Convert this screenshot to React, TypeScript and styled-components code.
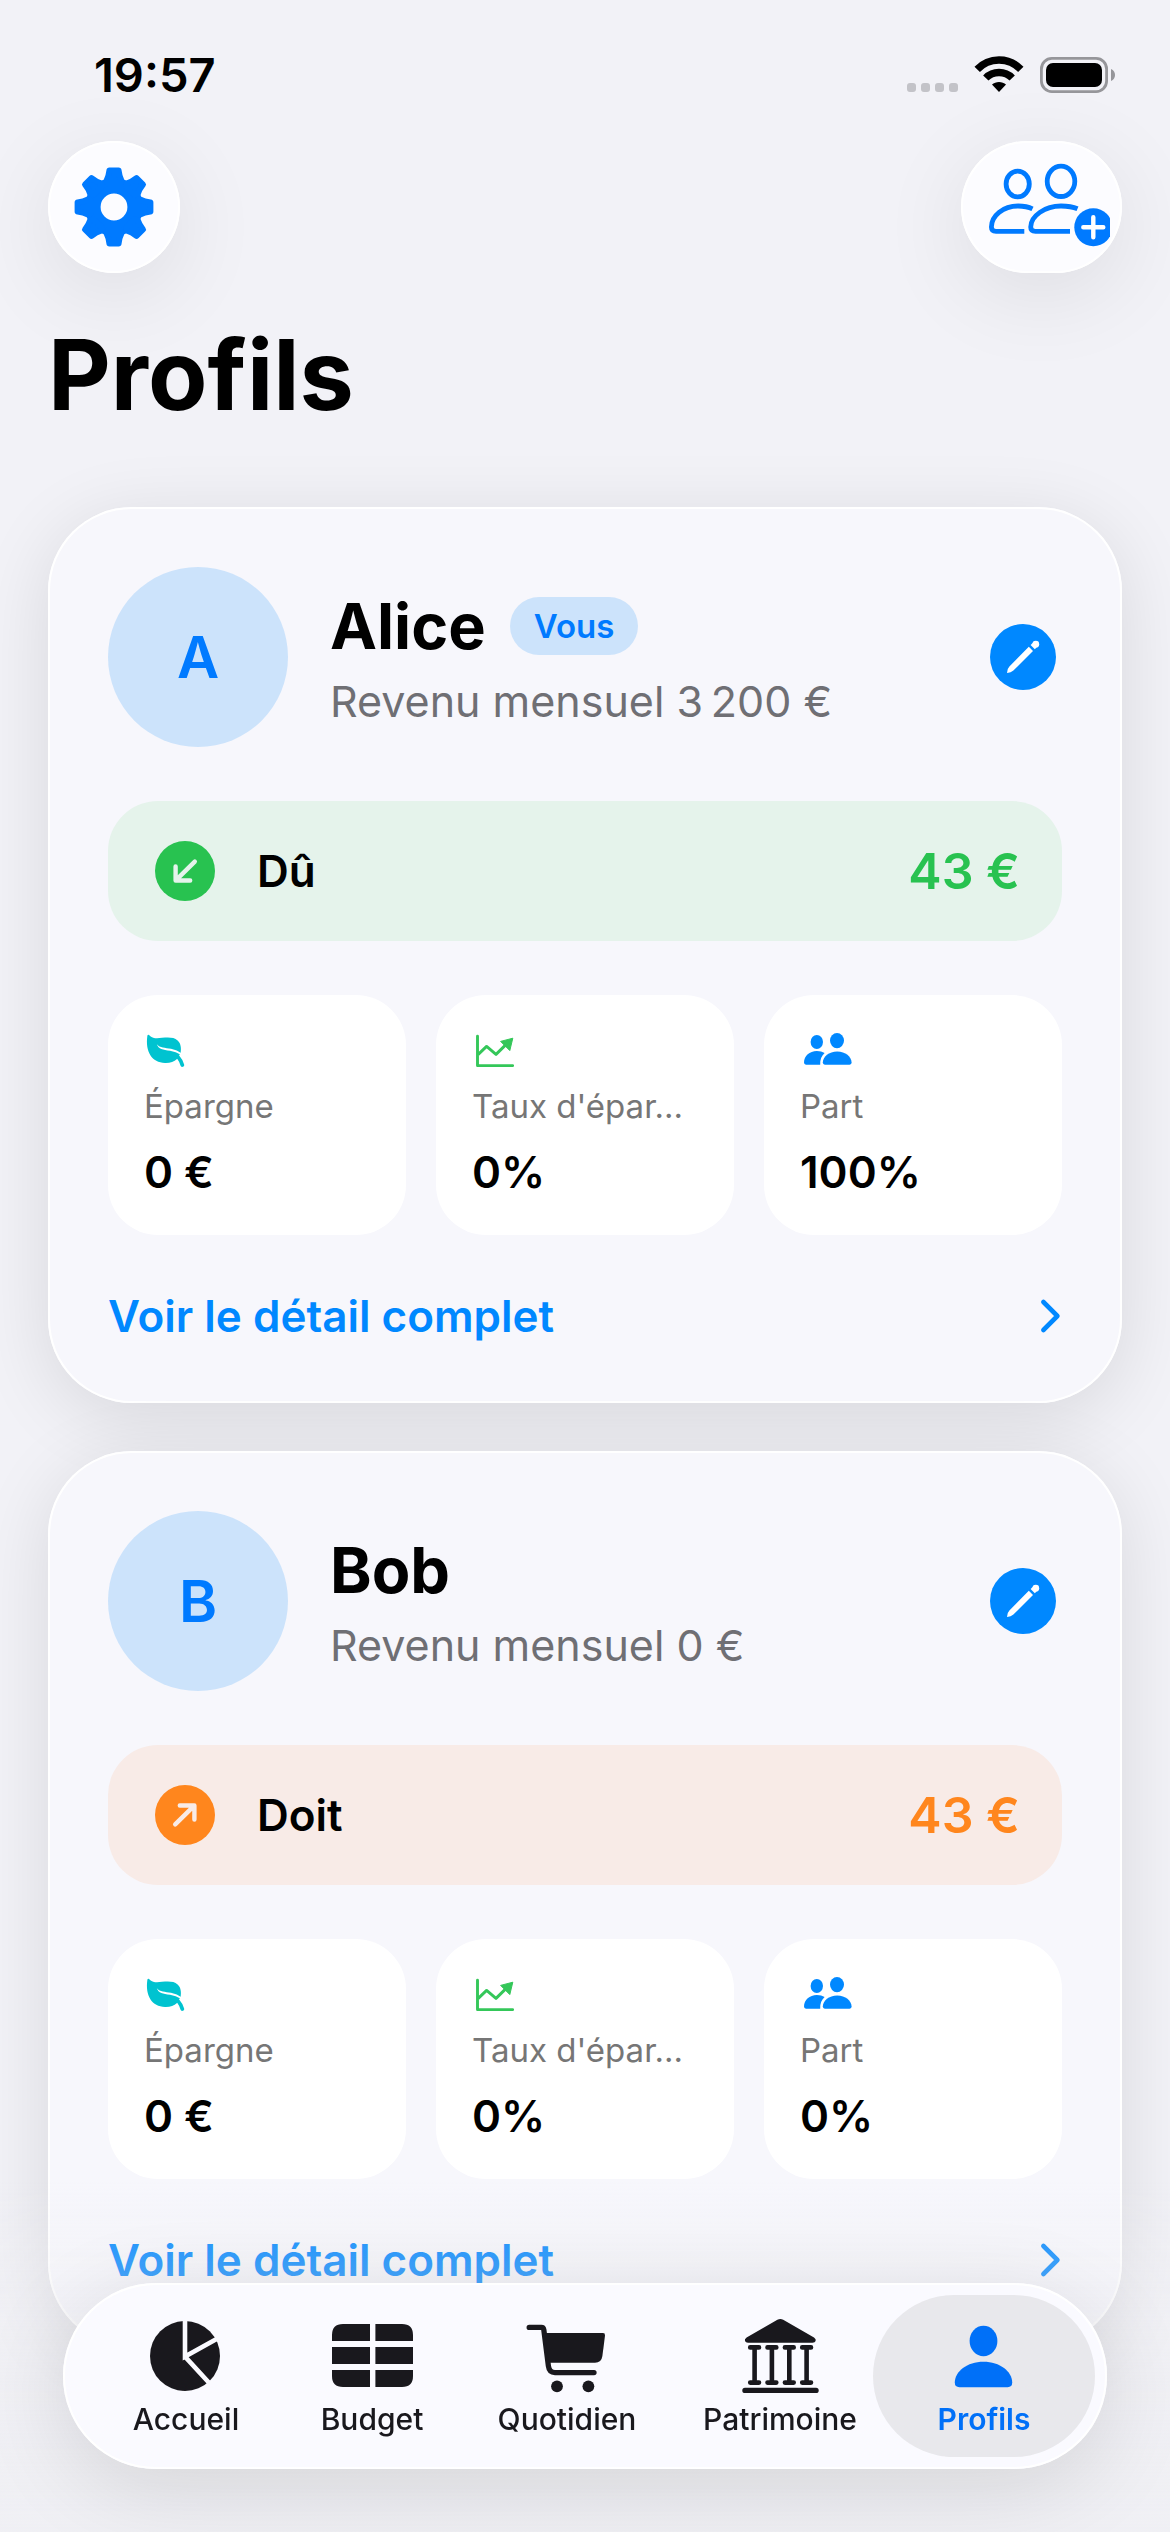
import React from "react";
import styled, { createGlobalStyle } from "styled-components";

const BLUE = "#0088ff";
const DEEP_BLUE = "#007aff";
const INK = "#19181d";

const GlobalStyle = createGlobalStyle`
  *, *::before, *::after { box-sizing: border-box; }
  body {
    margin: 0;
    background: #f2f2f7;
    color: #000;
    font-family: Inter, "Noto Sans", "Liberation Sans", sans-serif;
    font-size: 44px;
    line-height: 54px;
  }
  h1, h2, p, dl, dt, dd { margin: 0; }
  button { border: 0; padding: 0; font: inherit; cursor: pointer; }
  a { color: inherit; text-decoration: none; }
  svg { display: block; flex: none; }
`;

const Page = styled.div`
  display: flex;
  flex-direction: column;
  min-height: 100vh;
  padding: 0 48px 185px;
`;

const StatusBar = styled.div`
  display: flex;
  align-items: center;
  justify-content: space-between;
  height: 141px;
  padding: 8px 6px 0 46px;
`;

const Clock = styled.time`
  font-size: 47px;
  font-weight: 600;
`;

const Toolbar = styled.div`
  display: flex;
  justify-content: space-between;
`;

const GlassButton = styled.button<{ $width: number }>`
  display: flex;
  align-items: center;
  justify-content: center;
  width: ${(p) => p.$width}px;
  height: 132px;
  border-radius: 66px;
  background: #fcfcff;
  color: ${DEEP_BLUE};
  box-shadow: inset 0 0 0 2px #fff, 0 20px 90px rgba(0, 0, 0, 0.09);
`;

const Title = styled.h1`
  margin: 42px 0 72px;
  font-size: 97px;
  line-height: 120px;
  font-weight: 700;
`;

const CardList = styled.main`
  display: flex;
  flex-direction: column;
  gap: 48px;
`;

const Card = styled.article`
  display: flex;
  flex-direction: column;
  gap: 54px;
  padding: 60px;
  border-radius: 84px;
  background: #f7f7fc;
  box-shadow: inset 0 0 0 2px #fff, 0 14px 76px rgba(0, 0, 0, 0.11);
`;

const CardHeader = styled.header`
  display: flex;
  align-items: center;
  gap: 42px;
  padding-right: 6px;
`;

const Avatar = styled.div`
  display: grid;
  place-items: center;
  flex: none;
  width: 180px;
  height: 180px;
  border-radius: 50%;
  background: #cce3fb;
  color: ${DEEP_BLUE};
  font-size: 58px;
  font-weight: 600;
`;

const Identity = styled.div`
  display: flex;
  flex-direction: column;
  flex: 1;
  min-width: 0;
  gap: 8px;
`;

const NameRow = styled.div`
  display: flex;
  align-items: center;
  gap: 24px;
`;

const Name = styled.h2`
  font-size: 63px;
  line-height: 80px;
  font-weight: 700;
`;

const Badge = styled.span`
  padding: 8px 24px;
  border-radius: 29px;
  background: #cce3fb;
  color: ${DEEP_BLUE};
  font-size: 33px;
  line-height: 42px;
  font-weight: 600;
`;

const Income = styled.p`
  color: #6f6f74;
  font-size: 43px;
`;

const EditButton = styled.button`
  width: 66px;
  height: 66px;
  border-radius: 50%;
  background: ${BLUE};
  color: #fff;
`;

const Balance = styled.div<{ $owed: boolean }>`
  display: flex;
  align-items: center;
  gap: 42px;
  height: 140px;
  padding: 0 42px 0 47px;
  border-radius: 50px;
  background: ${(p) => (p.$owed ? "#e5f3eb" : "#f8ebe7")};
  color: ${(p) => (p.$owed ? "#28c250" : "#ff861d")};
`;

const BalanceLabel = styled.span`
  flex: 1;
  color: #000;
  font-weight: 600;
`;

const Amount = styled.span`
  font-size: 50px;
  font-weight: 600;
`;

const StatGrid = styled.dl`
  display: grid;
  grid-template-columns: repeat(3, 1fr);
  gap: 30px;
`;

const Stat = styled.div<{ $tint: string }>`
  display: flex;
  flex-direction: column;
  gap: 18px;
  min-width: 0;
  padding: 36px;
  border-radius: 50px;
  background: #fff;
  color: ${(p) => p.$tint};
`;

const StatLabel = styled.dt`
  color: #767676;
  font-size: 33px;
  line-height: 42px;
  white-space: nowrap;
`;

const StatValue = styled.dd`
  color: #000;
  font-weight: 600;
`;

const DetailLink = styled.a`
  && { color: ${BLUE}; }
  display: flex;
  align-items: center;
  justify-content: space-between;
  font-weight: 600;
`;

const BottomFade = styled.div`
  position: fixed;
  inset: auto 0 0;
  height: 352px;
  background: linear-gradient(rgba(238, 238, 242, 0), rgba(238, 238, 242, 0.3) 30%, rgba(238, 238, 242, 0.6));
  pointer-events: none;
`;

const TabBar = styled.nav`
  position: fixed;
  inset: auto 63px 63px;
  display: grid;
  grid-template-columns: 37fr 25fr 40fr 31fr 37fr;
  padding: 12px;
  border-radius: 93px;
  background: #fafaff;
  box-shadow: inset 0 0 0 2px #fff, 0 18px 90px rgba(0, 0, 0, 0.12);
`;

const Tab = styled.a<{ $active?: boolean }>`
  && { color: ${(p) => (p.$active ? "#0070f8" : INK)}; }
  display: flex;
  flex-direction: column;
  align-items: center;
  justify-content: center;
  gap: 5px;
  min-width: 0;
  height: 162px;
  border-radius: 81px;
  background: ${(p) => (p.$active ? "#e8e8ec" : "transparent")};
  font-size: 30px;
  line-height: 36px;
  font-weight: ${(p) => (p.$active ? 600 : 500)};
`;

const StatusIcons = () => (
  <svg width="210" height="40" viewBox="906 54 210 40" role="img" aria-label="Wi-Fi, batterie pleine">
    {[907, 921, 935, 949].map((x) => (
      <rect key={x} x={x} y="82" width="9" height="9" rx="3" fill="#c3c3c8" />
    ))}
    <g fill="none" stroke="#000" strokeWidth="7.4">
      <path d="M977.2 68.4 C989 55.8 1009 55.8 1020.8 68.4" />
      <path d="M985.8 77 C993 69.6 1005 69.6 1012.2 77" />
    </g>
    <path d="M999 91 L992 83.6 C995.5 80 1002.5 80 1006 83.6 Z" fill="#000" />
    <rect x="1041.4" y="57.4" width="65.2" height="33.2" rx="10.5" fill="none" stroke="#96969a" strokeWidth="2.8" />
    <rect x="1046" y="62" width="56" height="24" rx="7" fill="#000" />
    <path d="M1111 68 C1116.4 70 1116.4 78 1111 80 Z" fill="#96969a" />
  </svg>
);

const GearIcon = () => (
  <svg width="80" height="80" viewBox="-40 -40 80 80" aria-hidden="true">
    <circle r="21.2" fill="none" stroke="currentColor" strokeWidth="15.6" />
    {[0, 45, 90, 135, 180, 225, 270, 315].map((a) => (
      <path
        key={a}
        transform={`rotate(${a})`}
        d="M-4.6 -36.4 H4.6 Q5.4 -30 7.4 -26.5 L6 -23 H-6 L-7.4 -26.5 Q-5.4 -30 -4.6 -36.4 Z"
        fill="currentColor"
        stroke="currentColor"
        strokeWidth="6"
        strokeLinejoin="round"
      />
    ))}
  </svg>
);

const AddPeopleIcon = () => (
  <svg width="161" height="132" viewBox="0 0 161 132" aria-hidden="true">
    <clipPath id="badge-edge">
      <rect width="149" height="132" />
    </clipPath>
    <g fill="none" stroke="currentColor" strokeWidth="4.8">
      <ellipse cx="56.7" cy="43" rx="11.6" ry="12.9" />
      <ellipse cx="100" cy="40.3" rx="13.8" ry="15.2" />
      <path d="M71.5 67.8 C67 65.6 62 65 57 65 C42 65 30.4 75 30.4 86 Q30.4 90.3 35 90.3 H63.3" />
      <path d="M116.5 67.8 C111.5 65.6 106 65 100 65 C84 65 69.7 75 69.7 86 Q69.7 90.3 74.5 90.3 H109" />
    </g>
    <g clipPath="url(#badge-edge)">
      <circle cx="132.3" cy="86.3" r="19" fill="currentColor" />
    </g>
    <path d="M132.3 76.3 V96.3 M122.3 86.3 H142.3" stroke="#fff" strokeWidth="4.4" strokeLinecap="round" />
  </svg>
);

const PencilIcon = () => (
  <svg width="66" height="66" viewBox="0 0 66 66" aria-hidden="true">
    <path d="M17 49 Q17 45 19.4 42.6 L38.8 22.8 L43 27 L23.4 46.6 Q21 49 17 49 Z" fill="currentColor" />
    <path d="M40.6 21 L42.6 19 L46.8 23.2 L44.8 25.2 Z" fill="currentColor" />
    <circle cx="45.8" cy="20.2" r="3.4" fill="currentColor" />
  </svg>
);

const BalanceIcon = ({ owed }: { owed: boolean }) => (
  <svg width="60" height="60" viewBox="0 0 60 60" aria-hidden="true">
    <circle cx="30" cy="30" r="30" fill="currentColor" />
    <path
      d="M39.8 20.6 L21.5 38.6 M20.6 25.4 V39.5 H35.2"
      transform={owed ? undefined : "rotate(180 30 30)"}
      fill="none"
      stroke={owed ? "#e5f3eb" : "#f8ebe7"}
      strokeWidth="4.4"
      strokeLinecap="round"
      strokeLinejoin="round"
    />
  </svg>
);

const LeafIcon = () => (
  <svg width="52" height="36" viewBox="-2 -3 52 36" aria-hidden="true">
    <path
      d="M1.4 1.6 C2 0.4 3 0.8 4 1.9 C7 4.6 11 4.3 16 3.8 C23 3.2 28 3.2 31.6 6.4 C35 9.6 35.4 14 34.6 19 L31 25 C28 27.6 24 29.2 19 29 C6 28.6 -1 18 1.4 1.6 Z"
      fill="currentColor"
    />
    <path d="M27 20 C32.5 21.5 34.8 26 36.3 31" fill="none" stroke="currentColor" strokeWidth="3.8" strokeLinecap="round" />
    <path d="M10.8 10.2 C14 14 19 13.6 25 14.8 Q31 16 36 19.6 L34.8 20.8 Q30 17.8 24 16.8 C17 15.8 12.4 15 10.8 10.2 Z" fill="#fff" />
  </svg>
);

const ChartIcon = () => (
  <svg width="52" height="36" viewBox="-2 -3 52 36" aria-hidden="true">
    <path
      d="M3.5 2.2 V31.6 H38.6 M4 20.6 L12.6 12.4 L22 20.4 L34 8.6"
      fill="none"
      stroke="currentColor"
      strokeWidth="2.9"
      strokeLinecap="round"
      strokeLinejoin="round"
    />
    <path d="M38.8 4.2 L26.6 7.4 L35.8 16.6 Z" fill="currentColor" stroke="currentColor" strokeLinejoin="round" />
  </svg>
);

const PeopleIcon = () => (
  <svg width="52" height="36" viewBox="0 -1 52 36" aria-hidden="true">
    <g fill="currentColor">
      <ellipse cx="16.8" cy="10" rx="6.2" ry="6.9" />
      <ellipse cx="37" cy="8.6" rx="7" ry="7.7" />
      <path d="M4 30.6 C4 24 9.6 19 16.8 19 C20 19 22.4 19.8 24.6 21 C21.4 24 20 27.6 20.2 32.7 H6 Q4 32.7 4 30.6 Z" />
      <path d="M22.8 30.6 C22.8 24.6 29 19.4 37.2 19.4 C45.4 19.4 51.6 24.6 51.6 30.6 Q51.6 32.7 49.6 32.7 H24.8 Q22.8 32.7 22.8 30.6 Z" />
    </g>
  </svg>
);

const ChevronIcon = () => (
  <svg width="22" height="36" viewBox="0 0 22 36" aria-hidden="true">
    <path d="M3.4 4 L17.4 18 L3.4 32" fill="none" stroke="currentColor" strokeWidth="4.6" strokeLinecap="round" strokeLinejoin="round" />
  </svg>
);

const TabIcon = ({ children }: { children: React.ReactNode }) => (
  <svg width="82" height="80" viewBox="-1 0 82 80" fill="currentColor" aria-hidden="true">
    {children}
  </svg>
);

const PieIcon = () => (
  <TabIcon>
    <circle cx="39" cy="40" r="35" />
    <path d="M39 0 V40.6 L76 20 M39 40.6 L66 70" fill="none" stroke="#fafaff" strokeWidth="4.6" />
  </TabIcon>
);

const TableIcon = () => (
  <TabIcon>
    <path d="M11 8 H38 V25 H0 V19 Q0 8 11 8 Z M43.4 8 H70 Q81 8 81 19 V25 H43.4 Z" />
    <path d="M0 31 H38 V48 H0 Z M43.4 31 H81 V48 H43.4 Z" />
    <path d="M0 54 H38 V71 H11 Q0 71 0 60 Z M43.4 54 H81 V60 Q81 71 70 71 H43.4 Z" />
  </TabIcon>
);

const CartIcon = () => (
  <TabIcon>
    <path
      d="M2.2 11.4 H14.4 Q16.4 11.4 16.8 13.6 L21.4 50 Q22.2 56.6 28 56.6 H67"
      fill="none"
      stroke="currentColor"
      strokeWidth="5.3"
      strokeLinecap="round"
    />
    <path d="M18 17 H76 Q78.2 17 78 19.4 L75.4 40 Q74.4 46.8 68 46.8 H22 Z" />
    <circle cx="30" cy="70.3" r="5.9" />
    <circle cx="61.4" cy="70.3" r="5.9" />
  </TabIcon>
);

const BankIcon = () => (
  <TabIcon>
    <path d="M37.4 3.8 Q40.3 2.2 43.2 3.8 L74 21.4 Q76.4 23 75.6 25 Q75 26.8 72.6 26.8 H8 Q5.6 26.8 5 25 Q4.2 23 6.6 21.4 Z" />
    <g fill="none" stroke="currentColor" strokeWidth="4.6" strokeLinecap="round">
      {[14.6, 31.9, 49.3, 66.6].map((x) => (
        <path key={x} d={`M${x - 4.4} 31.4 h8.8 M${x - 4.4} 66.6 h8.8 M${x} 31.4 V66.6`} />
      ))}
      <path d="M5 74.4 H76" strokeWidth="5.4" />
    </g>
  </TabIcon>
);

const PersonIcon = () => (
  <TabIcon>
    <ellipse cx="39.5" cy="25" rx="13.9" ry="15.2" />
    <path d="M10.8 66.6 C10.8 55.6 23 45.8 39.5 45.8 C56 45.8 68.2 55.6 68.2 66.6 Q68.2 71.2 63.6 71.2 H15.4 Q10.8 71.2 10.8 66.6 Z" />
  </TabIcon>
);

type Profile = {
  name: string;
  you?: boolean;
  income: string;
  owed: boolean;
  amount: string;
  savings: string;
  rate: string;
  share: string;
};

const profiles: Profile[] = [
  { name: "Alice", you: true, income: "3\u202f200 €", owed: true, amount: "43 €", savings: "0 €", rate: "0%", share: "100%" },
  { name: "Bob", income: "0 €", owed: false, amount: "43 €", savings: "0 €", rate: "0%", share: "0%" },
];

const tabs = [
  { label: "Accueil", Icon: PieIcon },
  { label: "Budget", Icon: TableIcon },
  { label: "Quotidien", Icon: CartIcon },
  { label: "Patrimoine", Icon: BankIcon },
  { label: "Profils", Icon: PersonIcon, active: true },
];

const ProfileCard = ({ profile }: { profile: Profile }) => (
  <Card>
    <CardHeader>
      <Avatar aria-hidden="true">{profile.name[0]}</Avatar>
      <Identity>
        <NameRow>
          <Name>{profile.name}</Name>
          {profile.you && <Badge>Vous</Badge>}
        </NameRow>
        <Income>Revenu mensuel {profile.income}</Income>
      </Identity>
      <EditButton type="button" aria-label={`Modifier ${profile.name}`}>
        <PencilIcon />
      </EditButton>
    </CardHeader>
    <Balance $owed={profile.owed}>
      <BalanceIcon owed={profile.owed} />
      <BalanceLabel>{profile.owed ? "Dû" : "Doit"}</BalanceLabel>
      <Amount>{profile.amount}</Amount>
    </Balance>
    <StatGrid>
      <Stat $tint="#00c3d0">
        <LeafIcon />
        <StatLabel>Épargne</StatLabel>
        <StatValue>{profile.savings}</StatValue>
      </Stat>
      <Stat $tint="#34c759">
        <ChartIcon />
        <StatLabel>Taux d'épar…</StatLabel>
        <StatValue>{profile.rate}</StatValue>
      </Stat>
      <Stat $tint={BLUE}>
        <PeopleIcon />
        <StatLabel>Part</StatLabel>
        <StatValue>{profile.share}</StatValue>
      </Stat>
    </StatGrid>
    <DetailLink href="#detail">
      Voir le détail complet
      <ChevronIcon />
    </DetailLink>
  </Card>
);

export default function App() {
  return (
    <>
      <GlobalStyle />
      <Page>
        <StatusBar>
          <Clock>19:57</Clock>
          <StatusIcons />
        </StatusBar>
        <Toolbar>
          <GlassButton type="button" $width={132} aria-label="Réglages">
            <GearIcon />
          </GlassButton>
          <GlassButton type="button" $width={161} aria-label="Ajouter un profil">
            <AddPeopleIcon />
          </GlassButton>
        </Toolbar>
        <Title>Profils</Title>
        <CardList>
          {profiles.map((profile) => (
            <ProfileCard key={profile.name} profile={profile} />
          ))}
        </CardList>
      </Page>
      <BottomFade />
      <TabBar aria-label="Navigation principale">
        {tabs.map(({ label, Icon, active }) => (
          <Tab key={label} href={`#${label}`} $active={active} aria-current={active ? "page" : undefined}>
            <Icon />
            {label}
          </Tab>
        ))}
      </TabBar>
    </>
  );
}
